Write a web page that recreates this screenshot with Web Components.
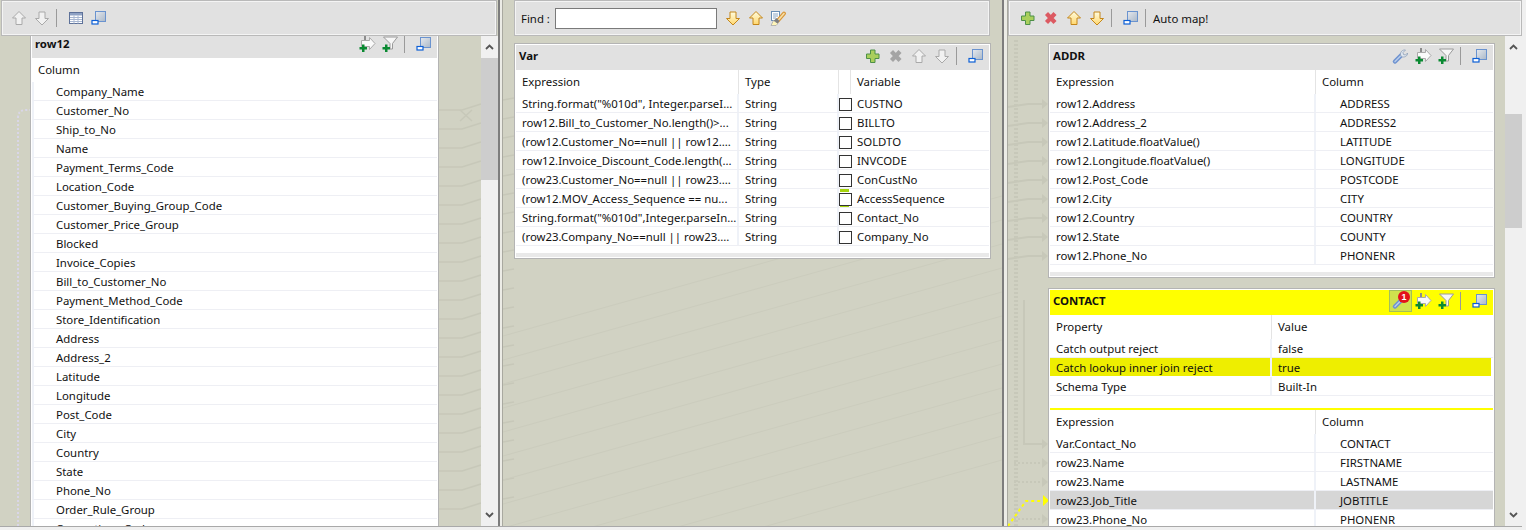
<!DOCTYPE html>
<html lang="en">
<head>
<meta charset="utf-8">
<title>tMap</title>
<style>
  html, body { margin: 0; height: 100%; overflow: hidden; background: #f0f0f0; }
  body { font: 11.4px "Noto Sans", sans-serif; color: #111; }
</style>
</head>
<body>
<tm-app>
  <tm-pane style="--toolbar-margin: 0 1px; --pane-width: 498px">
    <tm-toolbar slot="toolbar" style="padding-left: 9px">
      <tm-icon name="up-off"></tm-icon>
      <tm-icon name="down-off"></tm-icon>
      <tm-sep></tm-sep>
      <tm-icon name="table"></tm-icon>
      <tm-icon name="window"></tm-icon>
    </tm-toolbar>
    <tm-canvas style="--pad: 0 0 0 30px; --top: -5px">
      <tm-card heading="row12" style="width: 409px">
        <tm-icon slot="tools" name="arrow-add"></tm-icon>
        <tm-icon slot="tools" name="filter-add"></tm-icon>
        <tm-sep slot="tools"></tm-sep>
        <tm-icon slot="tools" name="window"></tm-icon>
        <tm-table edge cols="1fr" head="Column" indent="0" rows="Company_Name;Customer_No;Ship_to_No;Name;Payment_Terms_Code;Location_Code;Customer_Buying_Group_Code;Customer_Price_Group;Blocked;Invoice_Copies;Bill_to_Customer_No;Payment_Method_Code;Store_Identification;Address;Address_2;Latitude;Longitude;Post_Code;City;Country;State;Phone_No;Order_Rule_Group;Consortium_Code"></tm-table>
      </tm-card>
    </tm-canvas>
    <tm-scrollbar slot="scroll" style="--thumb-top: 0px; --thumb-height: 122px"></tm-scrollbar>
  </tm-pane>

  <tm-sash></tm-sash>

  <tm-pane style="--toolbar-margin: 0 12px 0 11px; --pane-width: 499px">
    <tm-toolbar slot="toolbar" style="padding-left: 6px">
      <tm-find></tm-find>
      <tm-icon name="down-on"></tm-icon>
      <tm-icon name="up-on"></tm-icon>
      <tm-icon name="find" style="margin-left: -1px"></tm-icon>
    </tm-toolbar>
    <tm-canvas style="--pad: 0 11px; --top: 7px">
      <tm-card heading="Var" strip>
        <tm-icon slot="tools" name="plus"></tm-icon>
        <tm-icon slot="tools" name="cross-off"></tm-icon>
        <tm-icon slot="tools" name="up-off"></tm-icon>
        <tm-icon slot="tools" name="down-off"></tm-icon>
        <tm-sep slot="tools"></tm-sep>
        <tm-icon slot="tools" name="window"></tm-icon>
        <tm-table cols="223px 100px 12px 1fr" head="Expression;Type;;Variable" rows='String.format("%010d", Integer.parseI...~String~[]~CUSTNO;row12.Bill_to_Customer_No.length()&gt;...~String~[]~BILLTO;(row12.Customer_No==null || row12....~String~[]~SOLDTO;row12.Invoice_Discount_Code.length(...~String~[]~INVCODE;(row23.Customer_No==null || row23....~String~[]~ConCustNo;(row12.MOV_Access_Sequence == nu...~String~[!]~AccessSequence;String.format("%010d",Integer.parseIn...~String~[]~Contact_No;(row23.Company_No==null || row23....~String~[]~Company_No'></tm-table>
      </tm-card>
    </tm-canvas>
  </tm-pane>

  <tm-sash style="--sash-width: 6px"></tm-sash>

  <tm-pane style="--toolbar-margin: 0; --pane-width: 514px">
    <tm-toolbar slot="toolbar" style="padding-left: 11px">
      <tm-icon name="plus"></tm-icon>
      <tm-icon name="cross-on"></tm-icon>
      <tm-icon name="up-on"></tm-icon>
      <tm-icon name="down-on"></tm-icon>
      <tm-sep></tm-sep>
      <tm-icon name="window"></tm-icon>
      <tm-sep></tm-sep>
      <span style="margin-left: -4px">Auto map!</span>
    </tm-toolbar>
    <tm-canvas style="--pad: 0 0 0 40px; --top: 7px; --gap: 10px">
      <tm-card heading="ADDR" strip style="width: 447px">
        <tm-icon slot="tools" name="wrench"></tm-icon>
        <tm-icon slot="tools" name="arrow-add"></tm-icon>
        <tm-icon slot="tools" name="filter-add"></tm-icon>
        <tm-sep slot="tools"></tm-sep>
        <tm-icon slot="tools" name="window"></tm-icon>
        <tm-table cols="266px 1fr" head="Expression;Column" indent="1" rows="row12.Address~ADDRESS;row12.Address_2~ADDRESS2;row12.Latitude.floatValue()~LATITUDE;row12.Longitude.floatValue()~LONGITUDE;row12.Post_Code~POSTCODE;row12.City~CITY;row12.Country~COUNTRY;row12.State~COUNTY;row12.Phone_No~PHONENR"></tm-table>
      </tm-card>
      <tm-card heading="CONTACT" alert style="width: 447px">
        <tm-icon slot="tools" name="wrench-alert"></tm-icon>
        <tm-icon slot="tools" name="arrow-add"></tm-icon>
        <tm-icon slot="tools" name="filter-add"></tm-icon>
        <tm-sep slot="tools"></tm-sep>
        <tm-icon slot="tools" name="window"></tm-icon>
        <tm-table cols="222px 1fr" head="Property;Value" marked="1" rows="Catch output reject~false;Catch lookup inner join reject~true;Schema Type~Built-In" style="--after: 12px"></tm-table>
        <tm-rule></tm-rule>
        <tm-table cols="266px 1fr" head="Expression;Column" indent="1" selected="3" rows="Var.Contact_No~CONTACT;row23.Name~FIRSTNAME;row23.Name~LASTNAME;row23.Job_Title~JOBTITLE;row23.Phone_No~PHONENR"></tm-table>
      </tm-card>
    </tm-canvas>
    <tm-scrollbar slot="scroll" style="--thumb-top: 56px; --thumb-height: 114px"></tm-scrollbar>
  </tm-pane>
</tm-app>

<script>
// ------------------------------------------------------------------------
// Icons, all drawn on a 16x16 box
// ------------------------------------------------------------------------
const arrowUp = 'M8 1.5 14.5 8H11v6.5H5V8H1.5Z'
const arrowDown = 'M8 15 14.5 8.5H11V2H5v6.5H1.5Z'
const greenPlus = '<path d="M3 8.5h2.5V11H8v2.5H5.5V16H3v-2.5H.5V11H3Z" fill="#0a8a32"/>'

const ICONS = {
  'up-off': `<path d="${arrowUp}" fill="#f1f1f1" stroke="#a9a9a9"/>`,
  'down-off': `<path d="${arrowDown}" fill="#f1f1f1" stroke="#a9a9a9"/>`,
  'up-on': `<path d="${arrowUp}" fill="url(#gold)" stroke="#c4861a"/>`,
  'down-on': `<path d="${arrowDown}" fill="url(#gold)" stroke="#c4861a"/>`,
  table: `<rect x="1.5" y="2.5" width="13" height="11" fill="#fff" stroke="#5d7199"/>
    <path d="M2 3h12v2.5H2Z" fill="#8fa2c4"/>
    <path d="M2 7.5h12M2 9.5h12M2 11.5h12M6 5.5v8M10 5.5v8" stroke="#a9b8d2"/>`,
  window: `<rect x="4.5" y="1.5" width="10" height="10" fill="url(#pane)" stroke="#6a93cf"/>
    <rect x="1" y="10.5" width="6" height="3.5" fill="#fff" stroke="#0c5fd6" stroke-width="1.2"/>`,
  plus: `<path d="M5.5 2H10v4h4v4.5h-4v4H5.5v-4h-4V6h4Z" fill="#a9cf5c" stroke="#4d9048"/>`,
  'cross-on': `<path d="M3.5 3.5 12 12.5M12 3.5 3.5 12.5" stroke="#dc5a62" stroke-width="4.2"/>`,
  'cross-off': `<path d="M3.5 3.5 12 12.5M12 3.5 3.5 12.5" stroke="#a4a4a4" stroke-width="4.2"/>`,
  'arrow-add': `<path d="M6 0v5" stroke="#8c8c8c" stroke-width="2"/>
    <path d="M2.5 4.5h8v-3L16 7.5l-5.500 6v-3h-8Z" fill="#fafafa" stroke="#aaa"/>
    ${greenPlus}`,
  'filter-add': `<path d="M1.5 1h14l-5 6.5V13H8V7.5Z" fill="#f7f7f7" stroke="#9a9a9a"/>
    ${greenPlus}`,
  wrench: `<path d="M3 13.5 9 7.5" stroke="#6f93d0" stroke-width="4.5" stroke-linecap="round"/>
    <path d="M3 13.5 9 7.5" stroke="#b9cdeb" stroke-width="1.4" stroke-linecap="round"/>
    <path d="M8.5 7C8 4 10.5 1.5 13.5 2L11 4.500l.5 2 2 .5L15.5 5C16 8 12 10 9.500 8.500Z" fill="#dfe6ef" stroke="#8d9fb8" stroke-width=".8"/>`,
  find: `<rect x="1.5" y="1.5" width="8" height="9" fill="#fff" stroke="#6a8fb5"/>
    <path d="M3 4h5M3 6h5M3 8h3" stroke="#8aa6c4"/>
    <path d="M7.5 11 14 3.5" stroke="#d8973a" stroke-width="4" stroke-linecap="round"/>
    <path d="M7.5 11 14 3.5" stroke="#f6dfa8" stroke-width="1.6" stroke-linecap="round"/>
    <path d="M1 15.5 3.5 10.5 8 13.5 6 15.5Z" fill="#fff6b8" stroke="#a8a8a8" stroke-width=".8"/>
    <path d="M4 10.5 6.5 8 9.5 11 7.5 13.5Z" fill="#7f7f7f"/>`
}

const iconTemplate = document.createElement('template')
iconTemplate.innerHTML = `
  <style>
    :host { display: inline-flex; flex: none; width: 16px; height: 16px; position: relative; }
    svg { display: block; position: relative; width: 16px; height: 16px; overflow: visible; }
    .flag, .count { display: none; }
    :host([name="wrench-alert"]) .flag {
      display: block; position: absolute; left: -3px; top: -3px; width: 23px; height: 22px;
      box-sizing: border-box; background: #cfe24e; border: 1px solid #a3bf5a;
    }
    :host([name="wrench-alert"]) .count {
      display: block; position: absolute; left: 6px; top: -2px; width: 12px; height: 12px;
      border-radius: 50%; background: #e3111b; color: #fff;
      font: bold 9px/12px "Liberation Sans", sans-serif; text-align: center;
    }
  </style>
  <div class="flag"></div>
  <svg viewBox="0 0 16 16" fill="none" aria-hidden="true"></svg>
  <div class="count">1</div>
`

customElements.define('tm-icon', class extends HTMLElement {
  constructor () {
    super()
    this.attachShadow({ mode: 'open' }).append(iconTemplate.content.cloneNode(true))
  }

  connectedCallback () {
    const name = this.getAttribute('name')
    const defs = `<defs>
      <linearGradient id="gold" x1="0" y1="0" x2="0" y2="1"><stop offset="0" stop-color="#fffde0"/><stop offset="1" stop-color="#ffd76e"/></linearGradient>
      <linearGradient id="pane" x1="0" y1="0" x2="1" y2="1"><stop offset="0" stop-color="#e6e9ee"/><stop offset="1" stop-color="#aab8c8"/></linearGradient>
    </defs>`
    this.shadowRoot.querySelector('svg').innerHTML = defs + (ICONS[name === 'wrench-alert' ? 'wrench' : name] || '')
    if (name !== 'wrench-alert') this.shadowRoot.querySelector('.count').remove()
  }
})

// ------------------------------------------------------------------------
// Simple elements that are only a styled box
// ------------------------------------------------------------------------
function defineBox (name, css, html = '<slot></slot>') {
  const template = document.createElement('template')
  template.innerHTML = `<style>${css}</style>${html}`
  customElements.define(name, class extends HTMLElement {
    constructor () {
      super()
      this.attachShadow({ mode: 'open' }).append(template.content.cloneNode(true))
    }
  })
}

defineBox('tm-sep', `
  :host { display: block; flex: none; width: 1px; height: 18px; background: #9a9a9a; margin: 0 4px 0 -1px; }
`, '')

defineBox('tm-sash', `
  :host { display: block; flex: none; width: var(--sash-width, 5px); height: 100%; box-sizing: border-box;
    border-left: 2px solid #7d7d7d; border-right: 1px solid #a9a9a0; background: #ecece6; }
`, '')

defineBox('tm-rule', `
  :host { display: block; height: 2px; background: #ffff00; }
`, '')

defineBox('tm-toolbar', `
  :host { display: flex; align-items: center; gap: 7px; height: 36px; box-sizing: border-box;
    background: #e1e1e1; border: 1px solid #b9b9b9; box-shadow: inset 0 0 0 1px #f4f4f4; }
`)

defineBox('tm-find', `
  :host { display: flex; align-items: center; flex: none; gap: 5px; margin-right: 1px; }
  .box { width: 160px; height: 19px; background: #fff; border: 1px solid #7a7a7a; }
`, 'Find :<div class="box"></div>')

defineBox('tm-canvas', `
  :host { display: block; flex: 1; min-width: 0; overflow: hidden; padding: var(--pad, 0); }
  .stack { display: flex; flex-direction: column; gap: var(--gap, 0); margin-top: var(--top, 0); }
  ::slotted(*) { flex: none; }
`, '<div class="stack"><slot></slot></div>')

defineBox('tm-pane', `
  :host { display: grid; grid-template-rows: 36px 1fr; flex: none; height: 100%; min-height: 0; width: var(--pane-width); overflow: hidden; }
  .bar { margin: var(--toolbar-margin, 0); }
  .body { display: flex; min-height: 0; overflow: hidden; }
`, '<div class="bar"><slot name="toolbar"></slot></div><div class="body"><slot></slot><slot name="scroll"></slot></div>')

defineBox('tm-scrollbar', `
  :host { display: flex; flex-direction: column; flex: none; width: 17px; height: 100%; background: #f0f0f0; }
  .arrow { flex: none; display: flex; align-items: center; justify-content: center; height: 22px; }
  .track { flex: 1; min-height: 0; }
  .thumb { margin-top: var(--thumb-top); height: var(--thumb-height); background: #cdcdcd; }
  svg { width: 9px; height: 6px; }
`, `
  <div class="arrow"><svg viewBox="0 0 9 6"><path d="M1 5 4.5 1.5 8 5" fill="none" stroke="#555" stroke-width="1.8"/></svg></div>
  <div class="track"><div class="thumb"></div></div>
  <div class="arrow"><svg viewBox="0 0 9 6"><path d="M1 1 4.5 4.5 8 1" fill="none" stroke="#555" stroke-width="1.8"/></svg></div>
`)

// ------------------------------------------------------------------------
// Card with a heading bar and a table
// ------------------------------------------------------------------------
const cardTemplate = document.createElement('template')
cardTemplate.innerHTML = `
  <style>
    :host { display: block; box-sizing: border-box; background: #fff; border: 1px solid #b4b4b4; padding: 1px; }
    header { display: flex; align-items: center; height: 25px; box-sizing: border-box; padding: 0 5px 4px 3px;
      background: #e1e1e1; font-weight: 700; }
    :host([alert]) header { background: #ffff00; }
    h2 { margin: 0 auto 0 0; font: inherit; }
    .tools { display: flex; align-items: center; gap: 7px; }
    .strip { display: none; height: 4px; margin-top: 7px; background: #e9e9e9; }
    :host([strip]) .strip { display: block; }
  </style>
  <header><h2></h2><div class="tools"><slot name="tools"></slot></div></header>
  <slot></slot>
  <div class="strip"></div>
`

customElements.define('tm-card', class extends HTMLElement {
  constructor () {
    super()
    this.attachShadow({ mode: 'open' }).append(cardTemplate.content.cloneNode(true))
  }

  connectedCallback () {
    this.shadowRoot.querySelector('h2').textContent = this.getAttribute('heading')
  }
})

const tableTemplate = document.createElement('template')
tableTemplate.innerHTML = `
  <style>
    :host { display: block; padding-bottom: var(--after, 0); }
    .row { display: grid; height: 19px; line-height: 19px; box-sizing: border-box; border-bottom: 1px solid #eeeff4; }
    .row.head { height: 24px; line-height: 24px; border-bottom: 0; }
    :host([edge]) .row:not(.head) { border-left: 2px solid #eff2f8; }
    .cell { padding-left: 6px; white-space: nowrap; overflow: hidden; border-right: 2px solid #eff2f8; position: relative; }
    .head .cell { border-right: 1px solid #e4e4e4; }
    .cell:last-child { border-right: 0; }
    .cell.indent { padding-left: 24px; }
    :host([edge]) .cell.indent { padding-left: 22px; }
    .row.selected { background: #d6d6d6; }
    .row.marked { padding-right: 2px; border-bottom-color: #fff; }
    .row.marked .cell { background: #eeee00; }
    .cell.check { padding: 0; border-right: 0; overflow: visible; }
    .box { display: block; position: absolute; left: 0; top: 4px; width: 13px; height: 13px; box-sizing: border-box; border: 1px solid #333; background: #fff; }
    .lime { position: absolute; left: 1px; width: 9px; height: 3px; background: #a6d40c; }
  </style>
`

customElements.define('tm-table', class extends HTMLElement {
  constructor () {
    super()
    this.attachShadow({ mode: 'open' }).append(tableTemplate.content.cloneNode(true))
  }

  connectedCallback () {
    const cols = this.getAttribute('cols')
    const indent = this.getAttribute('indent')
    const selected = this.getAttribute('selected')
    const marked = this.getAttribute('marked')

    const addRow = (cells, className) => {
      const row = document.createElement('div')
      row.className = className
      row.style.gridTemplateColumns = cols
      cells.forEach((text, i) => {
        const cell = document.createElement('div')
        cell.className = 'cell'
        if (text === '[]' || text === '[!]') {
          cell.classList.add('check')
          if (text === '[!]') {
            cell.insertAdjacentHTML('beforeend', '<i class="lime" style="top:0"></i><i class="lime" style="top:15px"></i>')
          }
          const box = document.createElement('i')
          box.className = 'box'
          cell.append(box)
        } else {
          cell.textContent = text
          if (String(i) === indent && !className.includes('head')) cell.classList.add('indent')
        }
        row.append(cell)
      })
      this.shadowRoot.append(row)
    }

    addRow(this.getAttribute('head').split(';'), 'row head')
    this.getAttribute('rows').split(';').forEach((line, i) => {
      let className = 'row'
      if (String(i) === selected) className += ' selected'
      if (String(i) === marked) className += ' marked'
      addRow(line.split('~'), className)
    })
  }
})

// ------------------------------------------------------------------------
// The application, with the mapping wires behind the panes
// ------------------------------------------------------------------------
function wires () {
  const line = '#c7c8b9'
  let out = ''
  // Straight wires with a small bend, right of the input table
  for (let y = 110; y < 526; y += 19) {
    out += `<path d="M439 ${y}H462L481 ${y - 6}M503 ${y - 10}L514 ${y - 12}" stroke="${line}" stroke-width="1.5" fill="none"/>`
  }
  out += `<path d="M460 110l12 11M472 110l-12 11" stroke="${line}" stroke-width="1.5" fill="none"/>`
  // Long slanted wires under the variable table
  for (let i = 0; i < 12; i++) {
    const y = 266 + i * 24
    out += `<path d="M503 ${y + 70}L1002 ${y - 70}" stroke="#cbccbd" stroke-width="1" fill="none"/>`
  }
  // Wires and arrow heads in front of the output tables
  for (let y = 104; y < 270; y += 19) {
    out += `<path d="M1008 ${y + 3}L1028 ${y}H1042" stroke="${line}" stroke-width="2" fill="none"/><path d="M1042 ${y - 5}l6 5-6 5Z" fill="${line}"/>`
  }
  for (const y of [463, 482, 519]) {
    out += `<path d="M1014 ${y}H1042" stroke="${line}" stroke-width="2" stroke-dasharray="2 2" fill="none"/><path d="M1042 ${y - 5}l6 5-6 5Z" fill="${line}"/>`
  }
  out += `<path d="M1024 300V444H1042" stroke="${line}" stroke-width="2" fill="none"/><path d="M1042 439l6 5-6 5Z" fill="${line}"/>`
  out += `<path d="M1016 40V526" stroke="${line}" stroke-width="4" stroke-dasharray="2 2" fill="none"/>`
  out += `<path d="M18 526V118Q18 110 26 110H31" stroke="#d9d6e8" stroke-width="2" stroke-dasharray="2 2" fill="none"/>`
  out += `<path d="M1008 526L1026 501H1043" stroke="#ffff00" stroke-width="2" stroke-dasharray="3 3" fill="none"/><path d="M1043 495l6 5.5-6 5.5Z" fill="#ffff00"/>`
  return out
}

defineBox('tm-app', `
  :host { display: flex; position: relative; width: 1522px; height: 526px; background: #d1d2c3; overflow: hidden; box-shadow: 0 1px #a9a9a9; }
  svg { position: absolute; left: 0; top: 0; width: 1522px; height: 526px; }
  .panes { display: flex; position: relative; height: 526px; }
`, `<svg viewBox="0 0 1522 526">${wires()}</svg><div class="panes"><slot></slot></div>`)
</script>
</body>
</html>
